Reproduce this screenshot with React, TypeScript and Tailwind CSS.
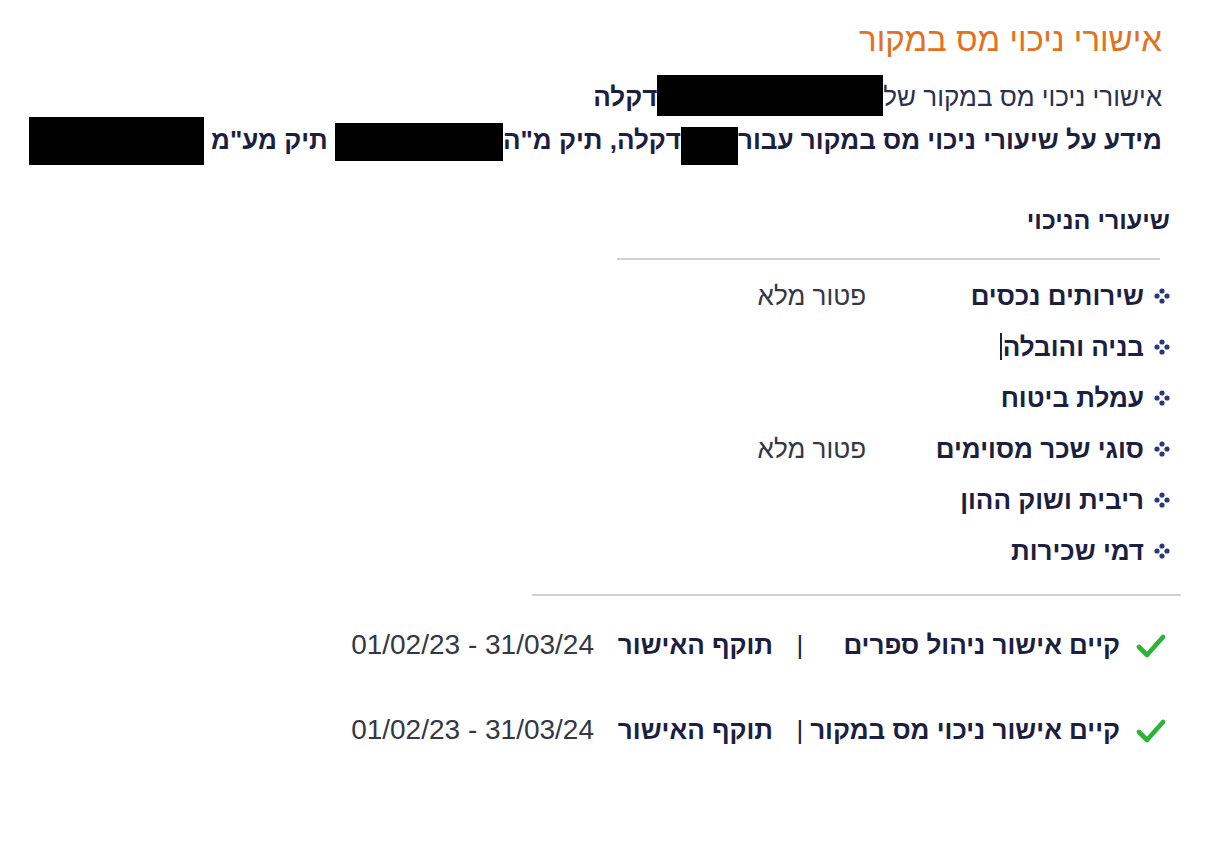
import React from "react";

const Bullet = () => (
  <svg width="16" height="16" viewBox="0 0 16 16" className="shrink-0">
    <circle cx="8" cy="3" r="2.6" fill="#2a3a78" />
    <circle cx="8" cy="13" r="2.6" fill="#2a3a78" />
    <circle cx="3" cy="8" r="2.6" fill="#2a3a78" />
    <circle cx="13" cy="8" r="2.6" fill="#2a3a78" />
  </svg>
);

const Check = () => (
  <svg width="30" height="26" viewBox="0 0 30 26" className="shrink-0">
    <path d="M3 15 L11 23 L27 5" fill="none" stroke="#2bb436" strokeWidth="4.6" strokeLinecap="round" strokeLinejoin="round" />
  </svg>
);

const Redact = ({ w, h, dy = 0 }: { w: number; h: number; dy?: number }) => (
  <span
    className="inline-block bg-black align-middle"
    style={{ width: w, height: h, marginTop: -24, marginBottom: -24, position: "relative", top: dy }}
  />
);

const rates: { label: string; value?: string; caret?: boolean }[] = [
  { label: "שירותים נכסים", value: "פטור מלא" },
  { label: "בניה והובלה", caret: true },
  { label: "עמלת ביטוח" },
  { label: "סוגי שכר מסוימים", value: "פטור מלא" },
  { label: "ריבית ושוק ההון" },
  { label: "דמי שכירות" },
];

const certs = [
  { title: "קיים אישור ניהול ספרים" },
  { title: "קיים אישור ניכוי מס במקור" },
];

export default function App() {
  return (
    <div
      dir="rtl"
      className="w-[1206px] h-[842px] bg-white text-[#1b2040] overflow-hidden"
      style={{ fontFamily: '"Liberation Sans", Arial, "DejaVu Sans", sans-serif' }}
    >
      <div className="pr-[44px] pt-[20px]">
        <h1 className="text-[33px] leading-[40px] text-[#e2721e]">אישורי ניכוי מס במקור</h1>
        <div className="mt-[15px] text-[26px] leading-[44px] whitespace-nowrap">
          <span className="text-[#2a3050]">אישורי ניכוי מס במקור של</span>
          <Redact w={226} h={41} dy={-4} />
          <span className="font-bold">דקלה</span>
        </div>
        <div className="text-[26px] leading-[42px] font-bold whitespace-nowrap">
          <span>מידע על שיעורי ניכוי מס במקור עבור</span>
          <Redact w={57} h={38} dy={4} />
          <span>דקלה, תיק מ"ה</span>
          <Redact w={168} h={38} />
          <span> תיק מע"מ </span>
          <Redact w={175} h={48} dy={-1} />
        </div>
      </div>

      <div className="pr-[36px] mt-[42px]">
        <div className="text-[25px] leading-[34px] font-bold">שיעורי הניכוי</div>
        <div className="mt-[21px] mr-[10px] w-[543px] h-[2px] bg-[#c9d1d9]" />
        <div className="mt-[10px]">
          {rates.map((r) => (
            <div key={r.label} className="flex items-center h-[51px]">
              <div className="w-[304px] flex items-center gap-[10px]">
                <Bullet />
                <span className="text-[26px] leading-[32px] font-bold relative whitespace-nowrap">
                  {r.label}
                  {r.caret && <span className="absolute left-[-3px] top-[2px] w-[2px] h-[27px] bg-[#1b2040]" />}
                </span>
              </div>
              {r.value && <div className="text-[26px] leading-[32px] text-[#333844]">{r.value}</div>}
            </div>
          ))}
        </div>
      </div>

      <div className="pr-[25px] mt-[18px]">
        <div className="w-[649px] h-[2px] bg-[#c9d1d9]" />
        <div className="pr-[15px]">
          {certs.map((c, i) => (
            <div key={c.title} className={`flex items-center h-[50px] whitespace-nowrap ${i > 0 ? "mt-[35px]" : "mt-[24px]"}`}>
              <div className="w-[352px] shrink-0 flex items-center gap-[16px]">
                <Check />
                <span className="text-[26px] font-bold">{c.title}</span>
              </div>
              <div className="w-[28px] shrink-0 text-center text-[26px]">|</div>
              <div className="w-[180px] shrink-0 pr-[13px] text-[26px] font-bold">תוקף האישור</div>
              <div className="pr-[12px] text-[28px] text-[#333844]" dir="ltr">01/02/23 - 31/03/24</div>
            </div>
          ))}
        </div>
      </div>
    </div>
  );
}
